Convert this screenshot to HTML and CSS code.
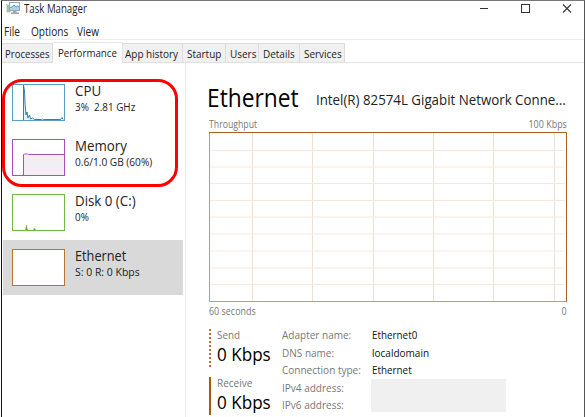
FILE: index.html
```html
<!DOCTYPE html>
<html lang="en">
<head>
<meta charset="utf-8">
<title>Task Manager</title>
<link rel="stylesheet" href="styles.css">
</head>
<body>
<div class="window">
  <header class="titlebar">
    <svg class="app-icon" width="15" height="14" viewBox="0 0 15 14"><path d="M.5 3v1.500M1 4h3v7H1z" fill="#9fc79f" stroke="#a3b5a3" stroke-width=".7"/><rect x="3.500" y="1.500" width="10" height="8" fill="#f2fafd" stroke="#a0a6aa"/><path d="M4 7l2-1 2-2 2 2 1.500-1L13 6v3H4z" fill="#a5d8ef"/><path d="M4 6.500l2-.5 2-2 2 2 1.500-1L13 6" fill="none" stroke="#4c9dc5"/><path d="M7 10h3.500v1.500H13V13H5v-1.500h2z" fill="#a2a7aa"/></svg>
    <h1 class="title"><span class="t s-title">Task Manager</span></h1>
    <svg class="controls" width="95" height="12" viewBox="0 0 95 12"><path d="M0 5.500h8" stroke="#333"/><rect x="41.500" y="1.500" width="8" height="8" fill="none" stroke="#333"/><path d="M83 1.500l8 8M91 1.500l-8 8" stroke="#333" stroke-width="1.100"/></svg>
  </header>
  <nav class="menu">
    <span class="m-file"><span class="t">File</span></span><span class="m-options"><span class="t">Options</span></span><span><span class="t">View</span></span>
  </nav>
  <nav class="tabs">
    <div class="tab w-proc"><span class="t s-proc">Processes</span></div>
    <div class="tab active w-perf"><span class="t s-perf">Performance</span></div>
    <div class="tab w-hist"><span class="t s-tab">App history</span></div>
    <div class="tab w-start"><span class="t s-tab">Startup</span></div>
    <div class="tab w-users"><span class="t s-tab">Users</span></div>
    <div class="tab w-det"><span class="t s-tab">Details</span></div>
    <div class="tab w-serv"><span class="t s-tab">Services</span></div>
  </nav>
  <main class="content">
    <aside class="sidebar">
      <div class="item">
        <svg class="thumb" width="53" height="37" viewBox="0 0 53 37"><rect x=".5" y=".5" width="52" height="36" fill="none" stroke="#5b9fc4"/><path d="M11.500 36V1l2 28 1 4 1-3 2 4 2 1 3 0v1z" fill="#e7f3fa"/><path d="M11.500 36V1l1 6 .5 12 1 12 1-3 1 6 1.500-3 1 4 2-1 2 1.500h7l1-.5 1 .5h17l1.500-2 1 2" fill="none" stroke="#2a83b2"/></svg>
        <div class="info"><div class="name"><span class="t s-name">CPU</span></div><div class="stat"><span class="t s-cpustat">3%&nbsp; 2.81 GHz</span></div></div>
      </div>
      <div class="item">
        <svg class="thumb" width="53" height="37" viewBox="0 0 53 37"><path d="M11.500 36V15.500h3l1 .5h37v20z" fill="#f2eef4"/><path d="M10.500 36h1V15.500l1-.5h3l1 .5h36" fill="none" stroke="#a850ba"/><rect x=".5" y=".5" width="52" height="36" fill="none" stroke="#a850ba"/></svg>
        <div class="info"><div class="name"><span class="t s-name">Memory</span></div><div class="stat"><span class="t s-memstat">0.6/1.0 GB (60%)</span></div></div>
      </div>
      <div class="item">
        <svg class="thumb" width="53" height="37" viewBox="0 0 53 37"><path d="M13.500 36l1-5 1 5zM21.500 36l1-2 1 2z" fill="#62b030" stroke="#62b030" stroke-width=".5"/><rect x=".5" y=".5" width="52" height="36" fill="none" stroke="#72b844"/></svg>
        <div class="info"><div class="name"><span class="t s-name">Disk 0 (C:)</span></div><div class="stat"><span class="t s-cpustat">0%</span></div></div>
      </div>
      <div class="item selected">
        <svg class="thumb" width="53" height="37" viewBox="0 0 53 37"><rect x=".5" y=".5" width="52" height="36" fill="#fff" stroke="#b87332"/></svg>
        <div class="info"><div class="name"><span class="t s-eth">Ethernet</span></div><div class="stat"><span class="t s-name">S: 0 R: 0 Kbps</span></div></div>
      </div>
      <div class="highlight"></div>
    </aside>
    <section class="detail">
      <div class="heading"><h2><span class="t s-h2">Ethernet</span></h2><p><span class="t s-adapter">Intel(R) 82574L Gigabit Network Conne...</span></p></div>
      <div class="axis top"><span class="t s-through">Throughput</span><span class="t end s-small">100 Kbps</span></div>
      <svg class="chart" width="358" height="170" viewBox="0 0 358 170"><path d="M43.500 1v168M103.500 1v168M164.500 1v168M224.500 1v168M284.500 1v168M345.500 1v168" stroke="#efe0d5"/><path d="M1 18.500h355M1 35h355M1 51.500h355M1 68.500h355M1 85h355M1 102h355M1 119h355M1 136h355M1 152.500h355" stroke="#f7e9de"/><path d="M.5 0v169.500H357" fill="none" stroke="#cf9762"/><path d="M0 .5h357.500V170" fill="none" stroke="#ad611e"/></svg>
      <div class="axis bottom"><span class="t s-small">60 seconds</span><span class="t end s-small">0</span></div>
      <div class="stats">
        <div class="rates">
          <div class="rate send"><div class="label"><span class="t s-small">Send</span></div><div class="value"><span class="t s-value">0 Kbps</span></div></div>
          <div class="rate receive"><div class="label"><span class="t s-prop">Receive</span></div><div class="value"><span class="t s-value">0 Kbps</span></div></div>
        </div>
        <div class="labels">
          <div><span class="t s-prop">Adapter name:</span></div><div><span class="t s-prop">DNS name:</span></div><div><span class="t s-prop">Connection type:</span></div><div><span class="t s-prop">IPv4 address:</span></div><div><span class="t s-prop">IPv6 address:</span></div>
        </div>
        <div class="values">
          <div><span class="t s-small">Ethernet0</span></div><div><span class="t s-prop">localdomain</span></div><div><span class="t s-small">Ethernet</span></div>
          <div class="redacted"></div>
        </div>
      </div>
    </section>
  </main>
</div>
</body>
</html>
```
FILE: styles.css
```css
* { box-sizing: border-box; }
body { margin: 0; background: #fff; overflow: hidden; font-family: "Open Sans", "Noto Sans", sans-serif; color: #222; }
h1, h2, p { margin: 0; font-weight: 400; }
svg { display: block; flex: none; }
.window { width: 584px; height: 417px; margin-left: 1px; border-top: 1px solid #777; border-left: 1px solid #111; border-right: 1px solid #555; overflow: hidden; }
.t { display: inline-block; white-space: nowrap; transform: scaleX(.84); transform-origin: left center; }
.t.end { transform-origin: right center; }
.s-title { transform: scaleX(.805); }
.s-proc, .s-through { transform: scaleX(.87); }
.s-perf { transform: scaleX(.885); }
.s-tab { transform: scaleX(.905); }
.s-name { transform: scaleX(.95); }
.s-cpustat { transform: scaleX(.9); }
.s-memstat { transform: scaleX(.92); }
.s-eth { transform: scaleX(.91); }
.s-h2 { transform: scaleX(.91); }
.s-adapter { transform: scaleX(.95); }
.s-small { transform: scaleX(.895); }
.s-value { transform: scaleX(.95); }
.s-prop { transform: scaleX(.91); }

.titlebar { height: 20px; display: flex; align-items: flex-start; padding: 0 0 0 4px; }
.title { font-size: 12px; line-height: 15px; width: 459px; padding-left: 3px; }
.controls { margin-top: 2px; }
.menu { height: 19px; display: flex; padding-left: 2px; font-size: 12px; line-height: 21px; border-bottom: 1px solid #ededed; }
.m-file { width: 27px; }
.m-options { width: 46px; }
.tabs { height: 23px; display: flex; align-items: flex-end; font-size: 11px; border-bottom: 1px solid #e0e0e0; }
.tab { height: 19px; line-height: 20px; padding-left: 3px; background: #f0f0f0; border: solid #dcdcdc; border-width: 1px 1px 0 0; color: #222; }
.tab.active { height: 21px; margin-bottom: -1px; padding-left: 5px; background: #fff; border-color: #e5e5e5; }
.w-proc { width: 51px; }
.w-perf { width: 70px; }
.w-hist { width: 60px; padding-left: 2px; }
.w-start { width: 43px; padding-left: 4px; }
.w-users { width: 33px; padding-left: 4px; }
.w-det { width: 41px; padding-left: 4px; }
.w-serv { width: 45px; padding-left: 4px; }

.content { display: flex; height: 354px; }
.sidebar { position: relative; width: 184px; padding: 12px 2px 0 1px; border-right: 1px solid #e8e8e8; }
.item { display: flex; height: 55px; padding: 8px 0 0 9px; }
.selected { background: #d9d9d9; }
.thumb { margin-top: 1px; }
.info { padding-left: 10px; margin-top: -1px; }
.name { font-size: 14px; line-height: 17px; }
.stat { font-size: 11px; line-height: 16px; }
.highlight { position: absolute; left: 0; top: 16px; width: 176px; height: 108px; border: 3px solid #f00; border-radius: 20px; }

.detail { padding: 16px 0 0 23px; }
.heading { display: flex; height: 37px; color: #000; }
.heading h2 { width: 108px; font-size: 25px; line-height: 36px; margin-left: -2px; }
.heading p { font-size: 14px; line-height: 42px; padding-left: 1px; color: #222; }
.axis { display: flex; justify-content: space-between; width: 358px; font-size: 10px; color: #777; }
.top { height: 16px; line-height: 16px; }
.bottom { height: 27px; line-height: 19px; }
.stats { display: flex; }
.rates { width: 73px; }
.rate { height: 38px; margin-bottom: 10px; padding-left: 6px; border-left: 2px solid #a65a16; }
.send { border-left: 2px dotted #d2642a; }
.label { font-size: 11px; line-height: 11px; color: #777; }
.value { font-size: 18px; line-height: 29px; color: #000; }
.labels { width: 90px; font-size: 11px; line-height: 17.6px; color: #777; margin-top: -3px; }
.values { font-size: 11px; line-height: 17.6px; color: #111; margin-top: -3px; }
.redacted { width: 135px; height: 33px; margin-left: -1px; background: #f0f0f0; }
```
